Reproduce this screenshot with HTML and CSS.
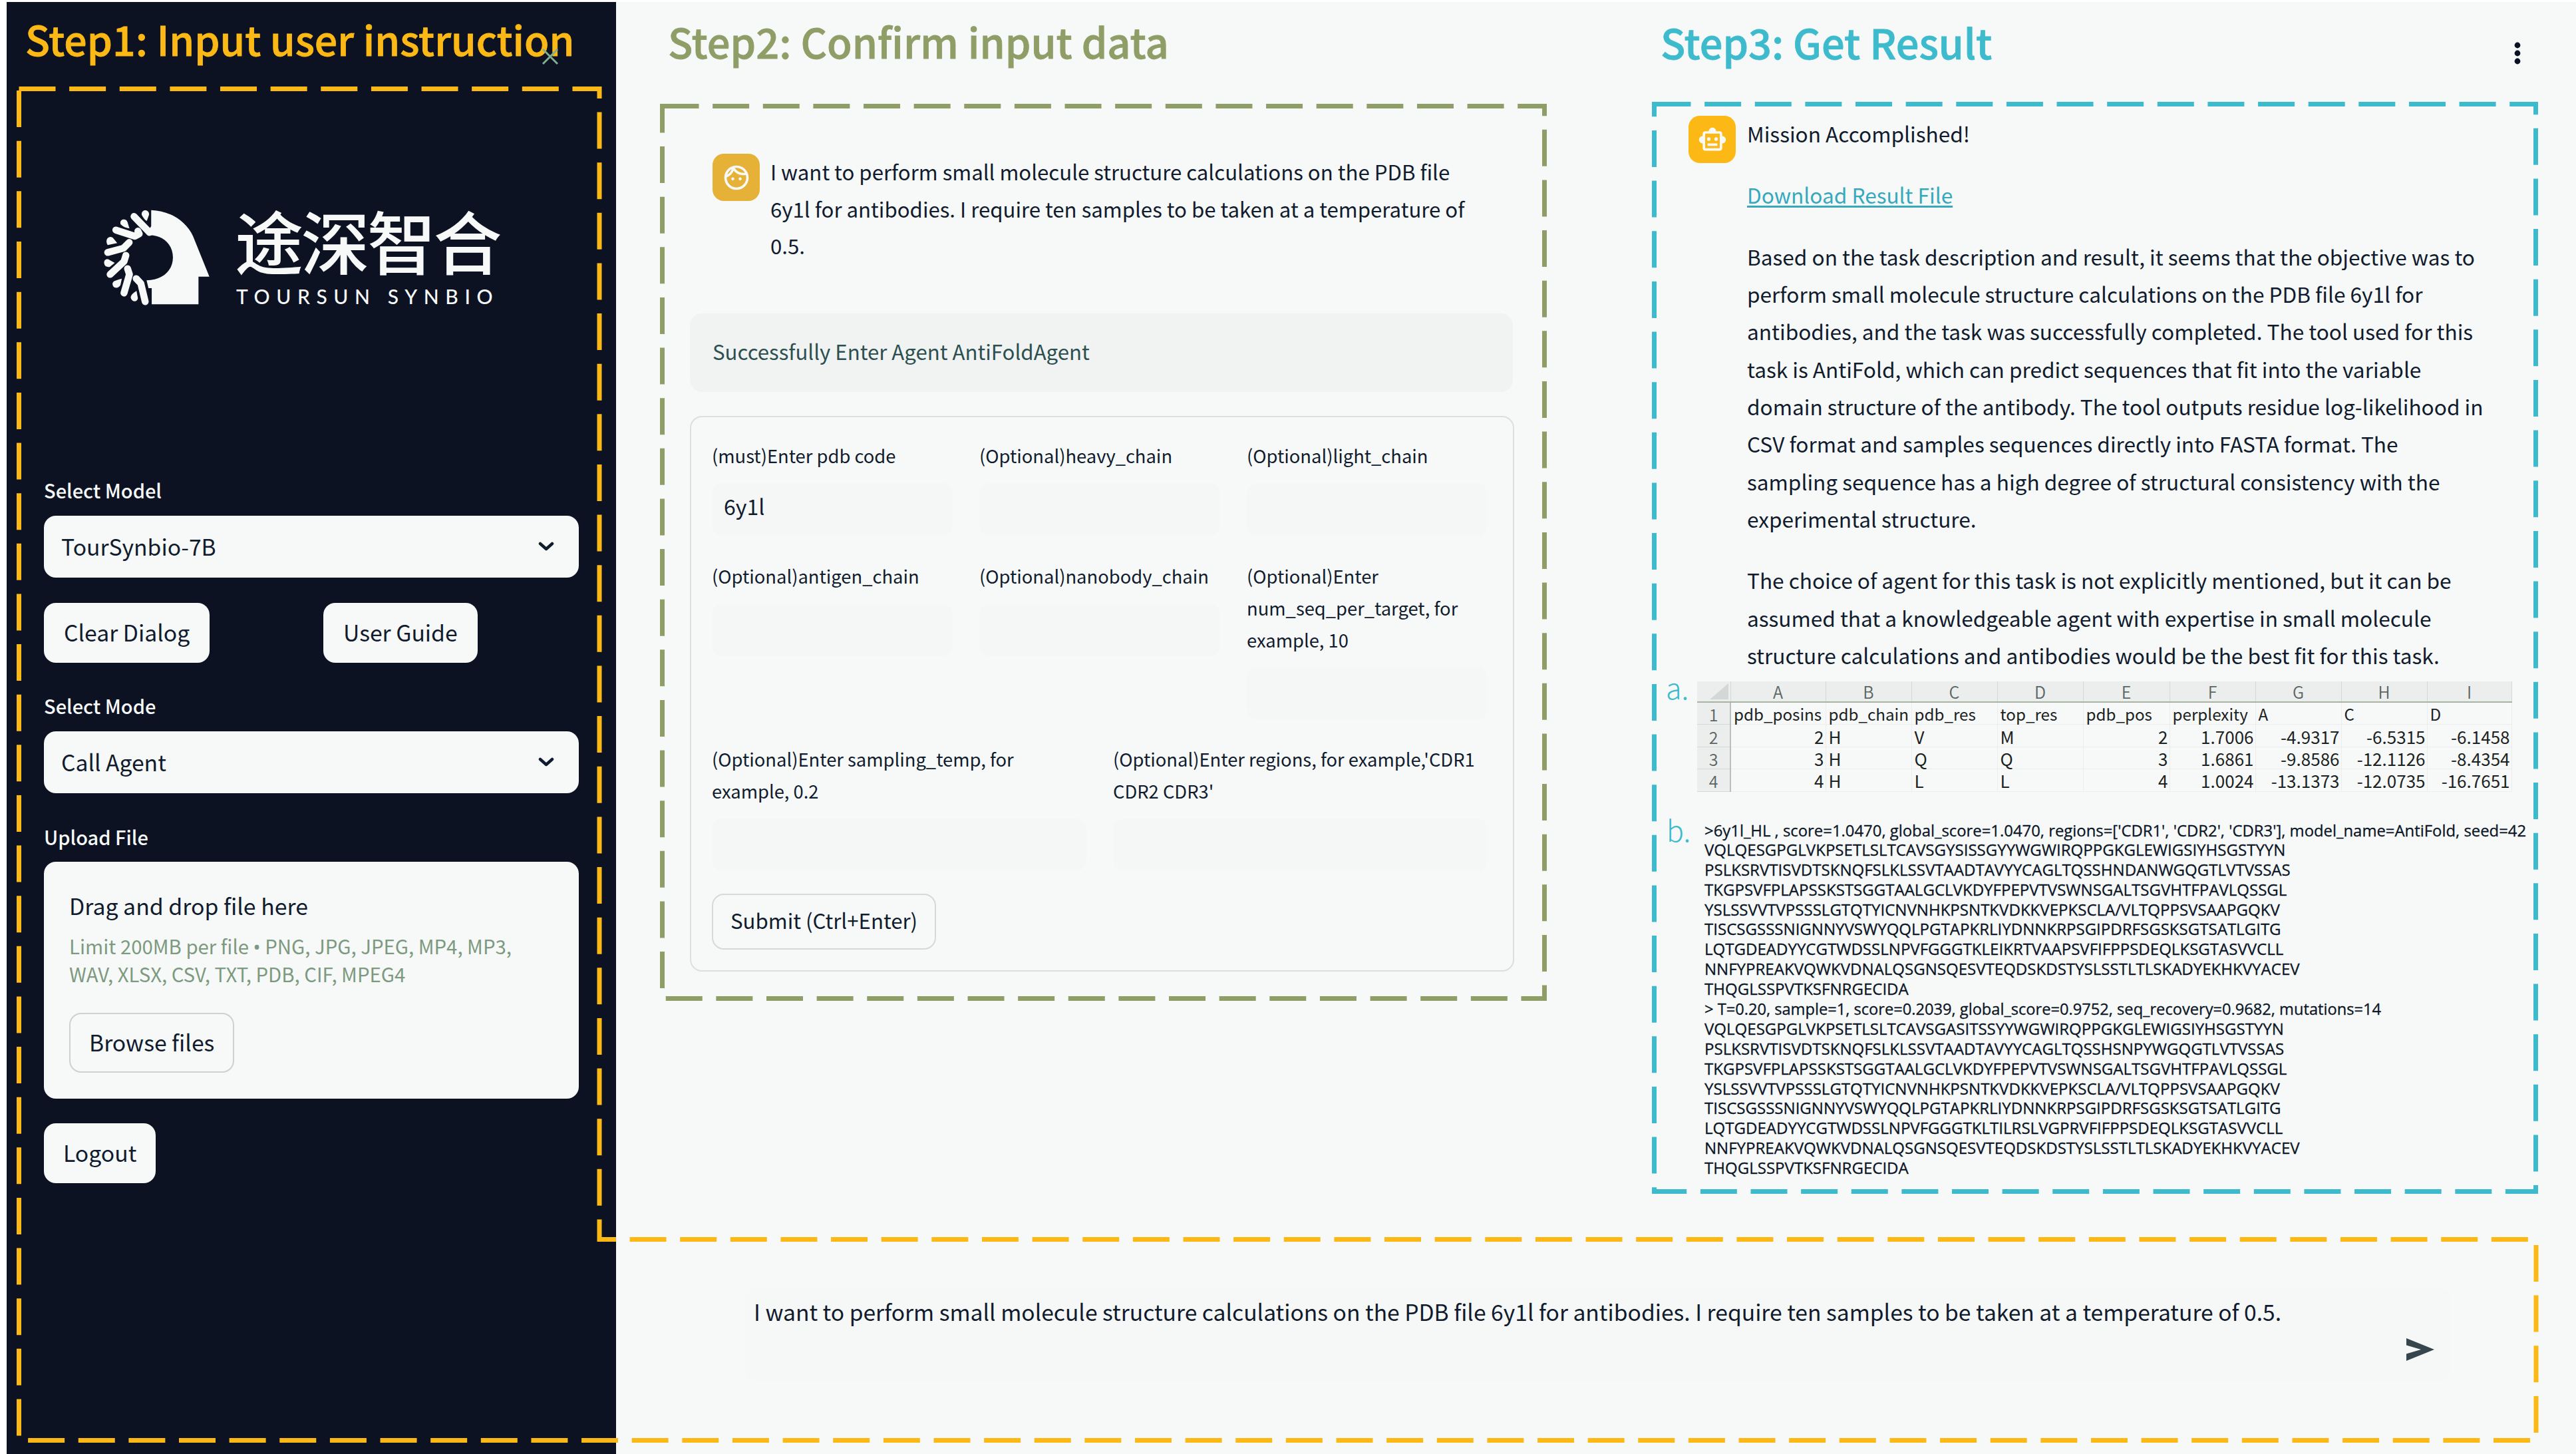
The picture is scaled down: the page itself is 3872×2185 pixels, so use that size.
FILE: index.html
```html
<!DOCTYPE html>
<html lang="en">
<head>
<meta charset="utf-8">
<title>TourSynbio Agent</title>
<link rel="stylesheet" href="styles.css">
</head>
<body>
<div class="screen">
  <aside class="sidebar">
    <h1 class="step-title step-title--one">Step1: Input user instruction
      <svg class="close" viewBox="0 0 26 26"><path d="M2 2 24 24M24 2 2 24"/></svg>
    </h1>
    <div class="brand">
      <svg class="brand-mark" viewBox="0 0 465 570" preserveAspectRatio="none">
        <path class="head" d="M238 77C310 80 368 130 392 195L452 377H412V502H240V429H228L221 394C285 392 318 345 318 290C318 235 285 192 232 190L222 178L238 150Z"/>
        <g class="strands">
          <path d="M175 106 232 178"/>
          <path d="M108 167 178 195 194 184M189 172 194 184"/>
          <path d="M78 268 136 249 157 223"/>
          <path d="M87 367 138 309 145 281"/>
          <path d="M138 451 158 367 151 341"/>
          <path d="M216 490 200 408 183 386"/>
        </g>
        <g class="drops">
          <path d="M203 98C201 70 232 72 230 98L222 126Q213 122 203 98Z"/>
          <path d="M126 142C118 115 148 112 151 132L158 160Q140 158 126 142Z"/>
          <path d="M75 228C68 198 92 190 100 206L113 226 78 235Z"/>
          <path d="M66 322C60 296 80 294 86 303L104 315 86 333Q70 336 66 322Z"/>
          <path d="M97 418C92 396 104 396 130 386L125 415C120 430 102 432 97 418Z"/>
          <path d="M163 474C161 460 174 450 184 441L189 474C188 492 168 494 163 474Z"/>
        </g>
      </svg>
      <div class="brand-text">
        <div class="brand-name" lang="zh">途深智合</div>
        <div class="brand-latin">TOURSUN SYNBIO</div>
      </div>
    </div>
    <div class="controls">
      <label class="label">Select Model</label>
      <div class="select">TourSynbio-7B<svg class="chevron" viewBox="0 0 24 14"><path d="M3 3 12 11 21 3"/></svg></div>
      <div class="buttons"><button class="button">Clear Dialog</button><button class="button">User Guide</button></div>
      <label class="label">Select Mode</label>
      <div class="select">Call Agent<svg class="chevron" viewBox="0 0 24 14"><path d="M3 3 12 11 21 3"/></svg></div>
      <label class="label">Upload File</label>
      <div class="uploader">
        <div class="uploader-title">Drag and drop file here</div>
        <div class="uploader-hint">Limit 200MB per file <span class="bullet">•</span> PNG, JPG, JPEG, MP4, MP3,<br>WAV, XLSX, CSV, TXT, PDB, CIF, MPEG4</div>
        <button class="button button--outline">Browse files</button>
      </div>
      <button class="button button--logout">Logout</button>
    </div>
  </aside>

  <main class="main">
    <section class="step step--two">
      <h2 class="step-title">Step2: Confirm input data</h2>
      <div class="message">
        <div class="avatar avatar--user"><svg viewBox="0 0 24 24"><path fill-rule="evenodd" d="M10.25 13c0 .69-.56 1.25-1.25 1.25S7.75 13.69 7.75 13s.56-1.25 1.25-1.25 1.25.56 1.25 1.25zM15 11.75c-.69 0-1.25.56-1.25 1.25s.56 1.25 1.25 1.25 1.25-.56 1.25-1.25-.56-1.25-1.25-1.25zm7 .25c0 5.52-4.48 10-10 10S2 17.52 2 12 6.48 2 12 2s10 4.48 10 10zM10.66 4.12C12.06 6.44 14.6 8 17.5 8c.46 0 .91-.05 1.34-.12C17.44 5.56 14.9 4 12 4c-.46 0-.91.05-1.34.12zM4.42 9.47c1.71-.97 3.03-2.55 3.66-4.44C6.37 6 5.05 7.58 4.42 9.47zM20 12c0-.78-.12-1.53-.33-2.24-.7.15-1.42.24-2.17.24-3.13 0-5.92-1.44-7.76-3.69C8.69 8.87 6.6 10.88 4 11.86c.01.04 0 .09 0 .14 0 4.42 3.58 8 8 8s8-3.58 8-8z"/></svg></div>
        <p class="message-text">I want to perform small molecule structure calculations on the PDB file<br>6y1l for antibodies. I require ten samples to be taken at a temperature of<br>0.5.</p>
      </div>
      <div class="alert">Successfully Enter Agent AntiFoldAgent</div>
      <form class="form">
        <div class="fields fields--three">
          <div class="field"><label>(must)Enter pdb code</label><div class="input">6y1l</div></div>
          <div class="field"><label>(Optional)heavy_chain</label><div class="input"></div></div>
          <div class="field"><label>(Optional)light_chain</label><div class="input"></div></div>
        </div>
        <div class="fields fields--three">
          <div class="field"><label>(Optional)antigen_chain</label><div class="input"></div></div>
          <div class="field"><label>(Optional)nanobody_chain</label><div class="input"></div></div>
          <div class="field"><label>(Optional)Enter<br>num_seq_per_target, for<br>example, 10</label><div class="input"></div></div>
        </div>
        <div class="fields fields--two">
          <div class="field"><label>(Optional)Enter sampling_temp, for<br>example, 0.2</label><div class="input"></div></div>
          <div class="field"><label>(Optional)Enter regions, for example,'CDR1<br>CDR2 CDR3'</label><div class="input"></div></div>
        </div>
        <button class="button button--submit" type="button">Submit (Ctrl+Enter)</button>
      </form>
    </section>

    <section class="step step--three">
      <header class="step-head">
        <h2 class="step-title">Step3: Get Result</h2>
        <svg class="menu" viewBox="0 0 10 34"><circle cx="5" cy="5" r="4.4"/><circle cx="5" cy="17" r="4.4"/><circle cx="5" cy="29" r="4.4"/></svg>
      </header>
      <div class="message message--result">
        <div class="avatar"><svg viewBox="0 0 24 24"><path d="M20 9V7c0-1.1-.9-2-2-2h-3c0-1.66-1.34-3-3-3S9 3.34 9 5H6c-1.1 0-2 .9-2 2v2c-1.66 0-3 1.34-3 3s1.34 3 3 3v4c0 1.1.9 2 2 2h12c1.1 0 2-.9 2-2v-4c1.66 0 3-1.34 3-3s-1.34-3-3-3zm-2 10H6V7h12v12zm-9-6c-.83 0-1.5-.67-1.5-1.5S8.17 10 9 10s1.5.67 1.5 1.5S9.83 13 9 13zm7.5-1.5c0 .83-.67 1.5-1.5 1.5s-1.5-.67-1.5-1.5.67-1.5 1.5-1.5 1.5.67 1.5 1.5zM8 15h8v2H8v-2z"/></svg></div>
        <div class="message-text">
          <p>Mission Accomplished!</p>
          <p><a class="link" href="#">Download Result File</a></p>
          <p>Based on the task description and result, it seems that the objective was to<br>perform small molecule structure calculations on the PDB file 6y1l for<br>antibodies, and the task was successfully completed. The tool used for this<br>task is AntiFold, which can predict sequences that fit into the variable<br>domain structure of the antibody. The tool outputs residue log-likelihood in<br>CSV format and samples sequences directly into FASTA format. The<br>sampling sequence has a high degree of structural consistency with the<br>experimental structure.</p>
          <p>The choice of agent for this task is not explicitly mentioned, but it can be<br>assumed that a knowledgeable agent with expertise in small molecule<br>structure calculations and antibodies would be the best fit for this task.</p>
        </div>
      </div>
      <div class="exhibit">
        <span class="marker">a.</span>
        <table class="sheet">
          <colgroup><col style="width:50px"><col style="width:143px"><col style="width:129px"><col style="width:129px"><col style="width:129px"><col style="width:130px"><col style="width:129px"><col style="width:129px"><col style="width:129px"><col style="width:127px"></colgroup>
          <thead><tr><th class="corner"><svg viewBox="0 0 30 26"><path d="M30 0V26H0Z"/></svg></th><th>A</th><th>B</th><th>C</th><th>D</th><th>E</th><th>F</th><th>G</th><th>H</th><th>I</th></tr></thead>
          <tbody>
            <tr class="names"><th>1</th><td>pdb_posins</td><td>pdb_chain</td><td>pdb_res</td><td>top_res</td><td>pdb_pos</td><td>perplexity</td><td>A</td><td>C</td><td>D</td></tr>
            <tr><th>2</th><td class="n">2</td><td>H</td><td>V</td><td>M</td><td class="n">2</td><td class="n">1.7006</td><td class="n">-4.9317</td><td class="n">-6.5315</td><td class="n">-6.1458</td></tr>
            <tr><th>3</th><td class="n">3</td><td>H</td><td>Q</td><td>Q</td><td class="n">3</td><td class="n">1.6861</td><td class="n">-9.8586</td><td class="n">-12.1126</td><td class="n">-8.4354</td></tr>
            <tr><th>4</th><td class="n">4</td><td>H</td><td>L</td><td>L</td><td class="n">4</td><td class="n">1.0024</td><td class="n">-13.1373</td><td class="n">-12.0735</td><td class="n">-16.7651</td></tr>
          </tbody>
        </table>
      </div>
      <div class="exhibit exhibit--fasta">
        <span class="marker">b.</span>
<pre class="fasta"><span class="record">&gt;6y1l_HL , score=1.0470, global_score=1.0470, regions=['CDR1', 'CDR2', 'CDR3'], model_name=AntiFold, seed=42</span>
VQLQESGPGLVKPSETLSLTCAVSGYSISSGYYWGWIRQPPGKGLEWIGSIYHSGSTYYN
PSLKSRVTISVDTSKNQFSLKLSSVTAADTAVYYCAGLTQSSHNDANWGQGTLVTVSSAS
TKGPSVFPLAPSSKSTSGGTAALGCLVKDYFPEPVTVSWNSGALTSGVHTFPAVLQSSGL
YSLSSVVTVPSSSLGTQTYICNVNHKPSNTKVDKKVEPKSCLA/VLTQPPSVSAAPGQKV
TISCSGSSSNIGNNYVSWYQQLPGTAPKRLIYDNNKRPSGIPDRFSGSKSGTSATLGITG
LQTGDEADYYCGTWDSSLNPVFGGGTKLEIKRTVAAPSVFIFPPSDEQLKSGTASVVCLL
NNFYPREAKVQWKVDNALQSGNSQESVTEQDSKDSTYSLSSTLTLSKADYEKHKVYACEV
THQGLSSPVTKSFNRGECIDA
<span class="record record--sample">&gt; T=0.20, sample=1, score=0.2039, global_score=0.9752, seq_recovery=0.9682, mutations=14</span>
VQLQESGPGLVKPSETLSLTCAVSGASITSSYYWGWIRQPPGKGLEWIGSIYHSGSTYYN
PSLKSRVTISVDTSKNQFSLKLSSVTAADTAVYYCAGLTQSSHSNPYWGQGTLVTVSSAS
TKGPSVFPLAPSSKSTSGGTAALGCLVKDYFPEPVTVSWNSGALTSGVHTFPAVLQSSGL
YSLSSVVTVPSSSLGTQTYICNVNHKPSNTKVDKKVEPKSCLA/VLTQPPSVSAAPGQKV
TISCSGSSSNIGNNYVSWYQQLPGTAPKRLIYDNNKRPSGIPDRFSGSKSGTSATLGITG
LQTGDEADYYCGTWDSSLNPVFGGGTKLTILRSLVGPRVFIFPPSDEQLKSGTASVVCLL
NNFYPREAKVQWKVDNALQSGNSQESVTEQDSKDSTYSLSSTLTLSKADYEKHKVYACEV
THQGLSSPVTKSFNRGECIDA</pre>
      </div>
    </section>

    <div class="composer">
      <span class="composer-text">I want to perform small molecule structure calculations on the PDB file 6y1l for antibodies. I require ten samples to be taken at a temperature of 0.5.</span>
      <svg class="send" viewBox="0 0 44 36"><path d="M1 1 43 18 1 35V24.500L23 18 1 11.500Z"/></svg>
    </div>
  </main>

  <!-- dashed outlines that group the three steps -->
  <svg class="outlines" viewBox="0 0 3872 2185">
    <path class="outline-one" d="M28.500 133.500H901V1862.500H3812V2164.500H28.500Z"/>
    <path class="outline-two" d="M995.500 159.500H2321.500V1500.500H995.500Z"/>
    <path class="outline-three" d="M2486.500 156.500H3811.500V1790.500H2486.500Z"/>
  </svg>
</div>
</body>
</html>
```
FILE: styles.css
```css
* { box-sizing: border-box; }

:root {
  --navy: #0c1222;
  --paper: #f7f9f9;
  --ink: #101b2d;
  --yellow: #fcb915;
  --olive: #8f9d67;
  --cyan: #3dbbcd;
  --line: #cdd1d1;
}

body {
  margin: 0;
  background: #fff;
  color: var(--ink);
  font-family: "Noto Sans CJK SC", "Noto Sans", sans-serif;
}

p, h1, h2, pre { margin: 0; }

.screen {
  position: relative;
  display: grid;
  grid-template-columns: 916px 1fr;
  width: 3872px;
  height: 2185px;
  padding: 3px 0 0 10px;
  overflow: hidden;
}

.outlines {
  position: absolute;
  inset: 0;
  width: 3872px;
  height: 2185px;
  pointer-events: none;
}
.outlines path {
  fill: none;
  stroke-width: 7;
  stroke-dasharray: 55 20.630;
  stroke-linejoin: miter;
}
.outline-one { stroke: var(--yellow); }
.outline-two { stroke: var(--olive); }
.outline-three { stroke: var(--cyan); }

.step-title {
  height: 80px;
  font-size: 61.400px;
  line-height: 84px;
  font-weight: 500;
  white-space: nowrap;
  -webkit-text-stroke: .8px currentColor;
}

/* Sidebar */
.sidebar {
  background: var(--navy);
  padding: 13px 56px 0 56px;
}
.step-title--one {
  position: relative;
  margin-left: -28px;
  font-size: 60.800px;
  line-height: 83px;
  color: var(--yellow);
}
.close {
  position: absolute;
  left: 776px;
  top: 56px;
  width: 26px;
  height: 26px;
}
.close path { fill: none; stroke: #7fae93; stroke-width: 3; }

.brand {
  display: flex;
  gap: 33px;
  margin: 194px 0 0 64px;
  height: 190px;
}
.brand-mark { width: 190px; height: 190px; fill: var(--paper); }
.strands path {
  fill: none;
  stroke: var(--paper);
  stroke-width: 10.500px;
  stroke-linecap: round;
  stroke-linejoin: round;
  vector-effect: non-scaling-stroke;
}
.brand-text { padding-top: 16px; color: var(--paper); white-space: nowrap; }
.brand-name {
  font-size: 103px;
  line-height: 110px;
  letter-spacing: -3.500px;
  font-weight: 500;
}
.brand-latin {
  margin-top: 11px;
  padding-left: 2px;
  font-family: Lato, sans-serif;
  font-size: 30px;
  line-height: 36px;
  font-weight: 500;
  letter-spacing: 9.600px;
}

.controls { padding-top: 236px; display: flex; flex-direction: column; }
.label {
  margin-bottom: 19px;
  font-size: 29px;
  line-height: 40px;
  font-weight: 500;
  color: var(--paper);
}
.select {
  display: flex;
  align-items: center;
  justify-content: space-between;
  height: 93px;
  margin-bottom: 38px;
  padding: 0 37px 3px 26px;
  border-radius: 18px;
  background: var(--paper);
  font-size: 33.650px;
}
.chevron { width: 24px; height: 14px; margin-bottom: -2px; }
.chevron path { fill: none; stroke: var(--ink); stroke-width: 4.500; stroke-linecap: round; stroke-linejoin: round; }
.select + .label { margin: 7px 0 18px; }
.buttons { display: grid; grid-template-columns: 1fr 1fr; column-gap: 36px; margin-bottom: 44px; }
.button {
  justify-self: start;
  align-self: flex-start;
  height: 90px;
  padding: 0 30px 4px;
  border: 0;
  border-radius: 18px;
  background: var(--paper);
  color: var(--ink);
  font: 400 33.700px "Noto Sans CJK SC", sans-serif;
  white-space: nowrap;
}
.button--outline { border: 2px solid var(--line); padding: 0 28px 3px; }
.button--logout { margin-top: 37px; padding: 0 29px 4px; }
.uploader {
  height: 356px;
  padding: 41px 39px 0 38px;
  border-radius: 18px;
  background: var(--paper);
  white-space: nowrap;
}
.uploader-title { font-size: 33.800px; line-height: 50px; }
.uploader-hint { margin: 14px 0 38px; font-size: 29.350px; line-height: 42px; color: #7d9a80; }
.bullet { font-family: "Noto Sans", sans-serif; line-height: 1; }

/* Main area */
.main {
  display: grid;
  grid-template-columns: 1557px 1fr;
  grid-template-rows: 1932px 1fr;
  background: var(--paper);
}
.step--two { padding: 17px 207px 0 111px; }
.step--two .step-title { margin-left: -33px; color: var(--olive); }
.message { display: flex; gap: 16px; margin: 130px 0 0 34px; }
.avatar {
  flex: none;
  display: flex;
  align-items: center;
  justify-content: center;
  width: 71px;
  height: 71px;
  border-radius: 17px;
  background: #fcb915;
}
.avatar svg { width: 44px; height: 44px; fill: var(--paper); }
.avatar--user { margin-top: 1px; background: #e5b136; }
.message-text { font-size: 31.200px; line-height: 55.600px; white-space: nowrap; }
.alert {
  display: flex;
  align-items: center;
  width: 1237px;
  height: 118px;
  margin-top: 74px;
  padding: 0 34px 4px;
  border-radius: 18px;
  background: #f1f3f3;
  color: #2c4f50;
  font-size: 31.200px;
}
.form {
  width: 1239px;
  height: 835px;
  margin-top: 36px;
  padding: 33px 31px 0;
  border: 2px solid #dcdfdf;
  border-radius: 18px;
}
.fields { display: grid; column-gap: 40px; margin-bottom: 36px; }
.fields--three { grid-template-columns: repeat(3, 362px); }
.fields--two { grid-template-columns: repeat(2, 563px); margin-bottom: 34px; }
.fields--two { margin-top: -2px; }
.field label { display: block; font-size: 27.350px; line-height: 48px; white-space: nowrap; }
.input {
  height: 79px;
  margin-top: 18px;
  padding: 9px 18px;
  border-radius: 16px;
  background: #f5f7f7;
  font-size: 32px;
  line-height: 51px;
}
.button--submit {
  height: 84px;
  padding: 0 26px 3px;
  border: 2px solid #d6d9d9;
  font-size: 31.200px;
  line-height: 40px;
}

.step--three { padding-top: 18px; }
.step-head { display: flex; justify-content: space-between; padding: 0 83px 0 13px; color: var(--cyan); }
.step-head .step-title { font-size: 61.300px; }
.menu { width: 10px; height: 34px; margin-top: 42px; fill: #0a1322; }
.message--result { margin: 71px 0 0 55px; gap: 17px; }
.message--result .avatar { margin-top: 2px; }
.message--result .message-text { font-size: 31.600px; line-height: 56.350px; }
.message-text p + p { margin-top: 36px; }
.link { color: #36a9bc; text-decoration-thickness: 3px; text-underline-offset: 3px; }

.exhibit { display: flex; margin-top: 12px; padding-left: 21px; }
.marker {
  width: 47px;
  height: 50px;
  margin-top: -17px;
  font-size: 43px;
  line-height: 50px;
  font-weight: 300;
  color: var(--cyan);
}
.sheet {
  border-collapse: collapse;
  table-layout: fixed;
  width: 1224px;
  color: #1b2222;
  font-size: 26px;
  line-height: 30px;
}
.sheet tr { height: 33.400px; }
.sheet thead tr { height: 31px; }
.sheet th, .sheet td { padding: 2px 0 0; white-space: nowrap; font-weight: 400; }
.sheet th { background: #eceeed; color: #5a6664; font-size: 25px; font-weight: 350; }
.sheet thead th { padding: 0; border-bottom: 2px solid #a9b3a4; border-right: 1px solid #d5d8d7; line-height: 29px; }
.sheet tbody th { border-right: 2px solid #b9bfbd; border-bottom: 1px solid #d5d8d7; }
.sheet td { padding-left: 4px; text-align: left; border-right: 1px solid #eceeee; border-bottom: 1px solid #eceeee; }
.sheet .n { padding: 2px 2px 0 0; text-align: right; }
.sheet .names td { font-size: 24.200px; }
.corner svg { display: block; width: 28px; height: 24px; margin-left: 19px; fill: #d3d7d6; }

.exhibit--fasta { margin-top: 43px; }
.exhibit--fasta .marker { width: 58px; margin-top: -12px; padding-left: 1px; }
.fasta {
  font-family: "Open Sans", "Noto Sans", sans-serif;
  font-size: 24.050px;
  line-height: 29.770px;
  color: #0b1526;
  -webkit-text-stroke: .3px currentColor;
}
.record { font-size: 23.860px; }
.record--sample { font-size: 23.650px; }

/* Prompt box */
.composer {
  grid-column: 1 / -1;
  display: flex;
  justify-content: space-between;
  width: 2565px;
  height: 140px;
  margin-left: 193px;
  padding: 8px 24px 0 14px;
  border-radius: 18px;
  background: #f6f8f8;
  font-size: 33.620px;
  line-height: 56px;
  white-space: nowrap;
}
.send { width: 44px; height: 36px; margin-top: 67px; fill: #37454d; }
```
